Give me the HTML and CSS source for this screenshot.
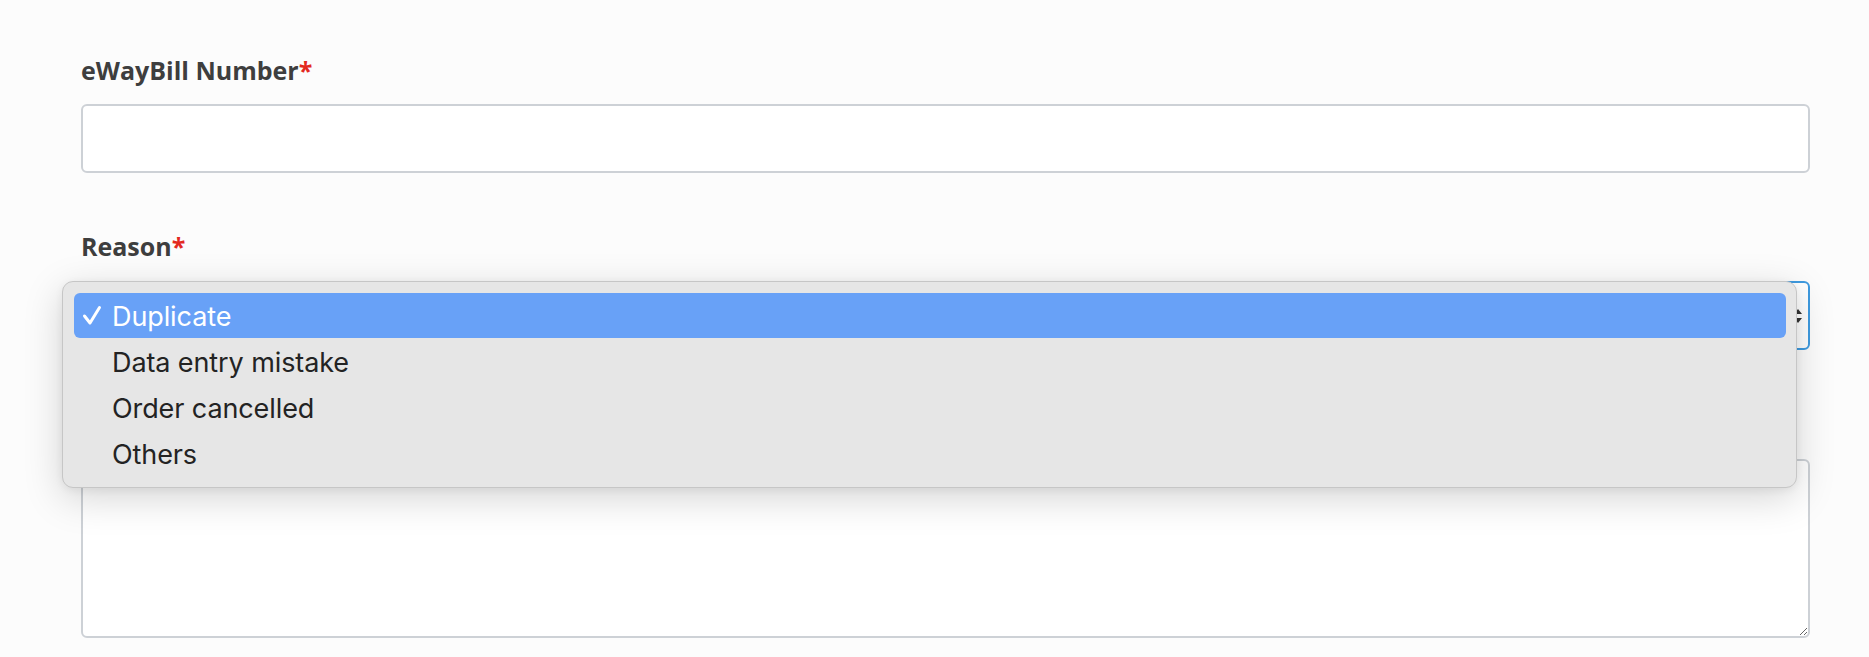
FILE: index.html
```html
<!DOCTYPE html>
<html lang="en">
<head>
<meta charset="utf-8">
<title>Cancel eWayBill</title>
<link rel="stylesheet" href="styles.css">
</head>
<body>
<form class="form">
  <div class="field">
    <label class="label">eWayBill Number<span class="req">*</span></label>
    <input class="input" type="text">
  </div>
  <div class="field field-select">
    <label class="label">Reason<span class="req">*</span></label>
    <div class="select">
      <svg class="select-arrow" width="12" height="20" viewBox="0 0 12 20"><path d="M2 8 L6 3 L10 8 Z M2 12 L6 17 L10 12 Z" fill="#333"/></svg>
    </div>
    <ul class="popup">
      <li class="option selected">
        <svg class="check" width="20" height="21" viewBox="0 0 20 21"><polyline points="2.5,11 8,18 17.5,2.5" fill="none" stroke="#fff" stroke-width="3" stroke-linecap="round" stroke-linejoin="round"/></svg>
        <span>Duplicate</span>
      </li>
      <li class="option"><span>Data entry mistake</span></li>
      <li class="option"><span>Order cancelled</span></li>
      <li class="option"><span>Others</span></li>
    </ul>
  </div>
  <div class="field field-text">
    <label class="label label-covered">Remarks<span class="req">*</span></label>
    <textarea class="textarea"></textarea>
  </div>
</form>
</body>
</html>
```

FILE: styles.css
```css
html, body {
  margin: 0;
  padding: 0;
  background: #fcfcfc;
}
.form {
  padding: 53px 59px 0 81px;
  display: flex;
  flex-direction: column;
  gap: 56px;
}
.field {
  display: flex;
  flex-direction: column;
  position: relative;
}
.label {
  font-family: "Open Sans", sans-serif;
  font-weight: 700;
  font-size: 25px;
  line-height: 34px;
  color: #3e3e3e;
  margin-bottom: 17px;
}
.label-covered {
  visibility: hidden;
  margin-bottom: 19px;
}
.req {
  color: #e3291f;
}
.input {
  box-sizing: border-box;
  height: 69px;
  border: 2px solid #cdd1d6;
  border-radius: 6px;
  background: #fff;
  outline: none;
  margin: 0;
}
.select {
  box-sizing: border-box;
  height: 69px;
  border: 2px solid #3f9be0;
  border-radius: 6px;
  background: #fff;
  display: flex;
  align-items: center;
  justify-content: flex-end;
  padding-right: 4px;
  margin-top: 1px;
}
.popup {
  position: absolute;
  left: -19px;
  right: 13px;
  top: 52px;
  margin: 0;
  padding: 11px 10px 11px 11px;
  list-style: none;
  background: #e6e6e6;
  border: 1px solid #c6c6c6;
  border-radius: 11px;
  box-shadow: 0 10px 38px rgba(0, 0, 0, 0.17), 0 2px 8px rgba(0, 0, 0, 0.06);
  z-index: 5;
  display: flex;
  flex-direction: column;
  gap: 1px;
}
.option {
  height: 45px;
  display: flex;
  align-items: center;
  padding-left: 38px;
  padding-top: 2px;
  box-sizing: border-box;
  position: relative;
  font-family: Inter, "Liberation Sans", sans-serif;
  font-size: 27px;
  letter-spacing: -0.1px;
  color: #232323;
  border-radius: 6px;
}
.option.selected {
  background: #68a1f7;
  color: #fff;
}
.check {
  position: absolute;
  left: 8px;
  top: 12px;
}
.textarea {
  box-sizing: border-box;
  height: 179px;
  border: 2px solid #cdd1d6;
  border-radius: 6px;
  background: #fff;
  outline: none;
  margin: 0;
  resize: both;
}
```
